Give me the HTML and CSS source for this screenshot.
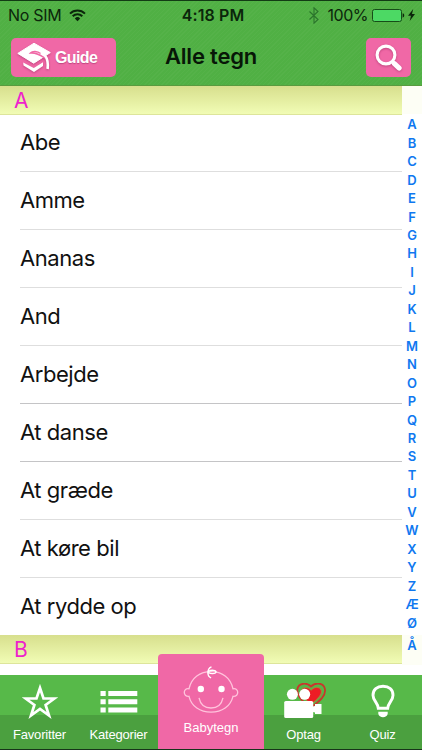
FILE: index.html
```html
<!DOCTYPE html>
<html lang="da">
  <head>
    <meta charset="UTF-8" />
    <meta name="viewport" content="width=device-width, initial-scale=1.0" />
    <title>Alle tegn</title>
    <link rel="stylesheet" href="styles.css">
  </head>
  <body>
    <div class="app">
      <header class="header">
        <div class="status">
          <div class="status-left">
            <span class="carrier">No SIM</span>
            <svg class="wifi" width="17" height="13" viewBox="0 0 17 13">
              <g fill="none" stroke="#0b260b" stroke-width="2">
                <path d="M1 4.6a10.6 10.6 0 0 1 15 0" />
                <path d="M3.7 7.3a6.8 6.8 0 0 1 9.6 0" />
              </g>
              <path d="M5.8 9.4a3.8 3.8 0 0 1 5.4 0L8.5 12.3z" fill="#0b260b" />
            </svg>
          </div>
          <span class="clock">4:18 PM</span>
          <div class="status-right">
            <svg class="bluetooth" width="10" height="17" viewBox="0 0 10 17">
              <path d="M.5 4.5l8.5 8-4 3.7V.8l4 3.7-8.5 8" fill="none" stroke="#2b742c" stroke-width="1.1" />
            </svg>
            <span class="percent">100%</span>
            <svg class="battery" width="33" height="13" viewBox="0 0 33 13">
              <rect x=".5" y=".5" width="29" height="12" rx="2" fill="#4cd964" stroke="#164d18" />
              <path d="M30.6 4.3c2.2.4 2.2 4 0 4.4z" fill="#0b260b" />
            </svg>
            <svg class="bolt" width="7" height="12" viewBox="0 0 7 12">
              <path d="M5.2 0L0 6.8h3L1.7 12 7 5H4z" fill="#0b260b" />
            </svg>
          </div>
        </div>
        <div class="navbar">
          <button class="guide-btn">
            <svg width="34" height="30" viewBox="0 0 34 30">
              <path d="M.8 10.4L17 .2l16.3 9.4-16.6 10.6z" fill="#fff" stroke="#fff" stroke-linejoin="round" />
              <path d="M23.5 10.5c-3-2.4-8-2.8-10-.4 4.500-.6 7.500.6 14.500 5" fill="none" stroke="#f068a6" stroke-width="1.5" />
              <path d="M28 12.5c2.6 3.500 3.200 8 2.600 13.500" fill="none" stroke="#fff" stroke-width="2.6" />
              <path d="M6.2 19.500l10.600 5.600 9.200-5.800v3.600L17 29 6.500 22.500z" fill="#fff" />
            </svg>
            <span>Guide</span>
          </button>
          <h1>Alle tegn</h1>
          <button class="search-btn" aria-label="Søg">
            <svg width="28" height="28" viewBox="0 0 28 28">
              <circle cx="11" cy="11" r="8.9" fill="none" stroke="#fff" stroke-width="3.1" />
              <path d="M17 17.2l2 2" stroke="#fff" stroke-width="3.5" />
              <path d="M19.4 19.6l4.8 4.5" stroke="#fff" stroke-width="5" stroke-linecap="round" />
            </svg>
          </button>
        </div>
      </header>

      <main class="content">
        <div class="list">
          <h2 class="section">A</h2>
          <ul>
            <li>Abe</li>
            <li>Amme</li>
            <li>Ananas</li>
            <li>And</li>
            <li class="dark">Arbejde</li>
            <li class="dark">At danse</li>
            <li>At græde</li>
            <li>At køre bil</li>
            <li>At rydde op</li>
          </ul>
          <h2 class="section">B</h2>
        </div>
        <div class="index">
          <span>A</span><span>B</span><span>C</span><span>D</span><span>E</span>
          <span>F</span><span>G</span><span>H</span><span>I</span><span>J</span>
          <span>K</span><span>L</span><span>M</span><span>N</span><span>O</span>
          <span>P</span><span>Q</span><span>R</span><span>S</span><span>T</span>
          <span>U</span><span>V</span><span>W</span><span>X</span><span>Y</span>
          <span>Z</span><span>Æ</span><span>Ø</span><span class="ring">Å</span>
        </div>
      </main>

      <nav class="tabbar">
        <a class="tab favorites">
          <svg width="36" height="38" viewBox="0 0 36 38">
            <path d="M18 5l3.5 10.5h11l-8.900 6.500 3.400 10.500-9-6.500-9 6.500 3.400-10.500-8.900-6.500h11z" fill="none" stroke="#fff" stroke-width="2.7" />
          </svg>
          <span>Favoritter</span>
        </a>
        <a class="tab categories">
          <svg width="38" height="38" viewBox="0 0 38 38">
            <path d="M.5 8h5.200v5H.5zM8.300 8h29v5h-29zM.5 16.200h5.200v5H.5zM8.300 16.200h29v5h-29zM.5 24.500h5.200v5H.5zM8.300 24.500h29v5h-29z" fill="#fff" />
          </svg>
          <span>Kategorier</span>
        </a>
        <a class="tab active">
          <svg width="56" height="50" viewBox="0 0 56 50">
            <g fill="none" stroke="#ffc3dc" stroke-width="1.3">
              <path d="M6 22.8C8.5 11.5 17 5.6 28 5.6s19.500 5.900 22 17.200c6-1.200 6.600 8 0 7.500C47.500 40.500 39 46.200 28 46.200S8.500 40.500 6 30.300c-6.600.5-6-8.700 0-7.500z" />
              <path d="M16 31.800c1.500 7 6 10.200 12 10.200s10.500-3.200 12-10.200" />
            </g>
            <path d="M28.500 .8c-4.500 1.400-5 9.500-.4 11M25.500 5.500c3-2.200 8.200-1 7.500.8-.7 1.900-5.500 1.500-7.500.3" fill="none" stroke="#fff" stroke-width="1.4" />
            <circle cx="17.800" cy="23" r="3.2" fill="#fff" />
            <circle cx="38.500" cy="23" r="3.2" fill="#fff" />
          </svg>
          <span>Babytegn</span>
        </a>
        <a class="tab record">
          <svg width="46" height="38" viewBox="0 0 46 38">
            <path d="M30 3.500C25.500-1 18 0 16.500 5.500 15 12.500 21 18 30 24.500 39 18 45.500 12.500 43.800 5.500 42-.5 34.500-1 30 3.500z" fill="#53b948" stroke="#c9372c" stroke-width="1.8" />
            <path d="M30.200 7c-4-4-9.200-2.700-10.200 1-1.300 4.500 4.500 9 10.200 13.200C36 17 41.800 12.500 40.400 7.500 39.200 3.600 33.500 3 30.200 7z" fill="#ee1c25" stroke="#9b8a3c" stroke-width="1.1" />
            <circle cx="11.400" cy="11.300" r="5.5" fill="#fff" />
            <circle cx="23.700" cy="11.300" r="5.5" fill="#fff" />
            <rect x="3.200" y="18" width="29" height="17" rx="1.6" fill="#fff" />
            <path d="M32 23.500l2-.5v-2h6.500v10H34v-1.500l-2-.4z" fill="#fff" />
          </svg>
          <span>Optag</span>
        </a>
        <a class="tab quiz">
          <svg width="26" height="38" viewBox="0 0 26 38">
            <path d="M8.300 25.300C7.800 19.500 3 17.500 3 12.300 3 6.500 7 3.300 13 3.300s10 3.200 10 9c0 5.200-4.800 7.200-5.300 13z" fill="none" stroke="#fff" stroke-width="2.9" />
            <path d="M8.300 28.800h9.400v2c-.5 4.600-8.900 4.600-9.400 0z" fill="#fff" />
          </svg>
          <span>Quiz</span>
        </a>
      </nav>
    </div>
  </body>
</html>
```
FILE: styles.css
```css
* {
  box-sizing: border-box;
}

body {
  margin: 0;
  font-family: Inter, sans-serif;
  background: #fff;
  color: #111;
}

.app {
  width: 422px;
  height: 750px;
  display: flex;
  flex-direction: column;
  overflow: hidden;
  border-bottom: 1px solid #17341a;
}

/* header */
.header {
  height: 86px;
  flex: none;
  border-top: 1px solid #123b14;
  border-bottom: 1px solid #599b3f;
  background: repeating-linear-gradient(135deg, #50b044 0, #50b044 2px, #55b249 2px, #55b249 3px);
}

.status {
  height: 28px;
  display: grid;
  grid-template-columns: 1fr auto 1fr;
  align-items: center;
  padding: 0 7px 0 8px;
  font-size: 16px;
  color: #0b260b;
}

.status-left,
.status-right {
  display: flex;
  align-items: center;
}

.status-right {
  justify-content: flex-end;
}

.carrier {
  letter-spacing: -0.3px;
}

.wifi {
  margin-left: 8px;
}

.clock {
  padding-left: 3px;
  font-weight: 600;
  letter-spacing: 0.1px;
}

.bluetooth {
  margin-right: 9px;
}

.percent {
  letter-spacing: -0.5px;
}

.battery {
  margin-left: 4px;
}

.bolt {
  margin-left: 3px;
}

.navbar {
  height: 57px;
  display: grid;
  grid-template-columns: 1fr auto 1fr;
  align-items: center;
  padding: 0 11px;
}

.navbar h1 {
  margin: 0;
  padding-bottom: 3px;
  font-size: 22px;
  font-weight: 600;
  letter-spacing: -0.2px;
  color: #071707;
}

button {
  border: none;
  padding: 0;
  height: 39px;
  border-radius: 5px;
  background-color: #f068a6;
  display: flex;
  align-items: center;
}

button svg {
  filter: drop-shadow(0 1px 1px rgba(120, 20, 70, 0.4));
}

.guide-btn {
  width: 105px;
  padding-left: 6px;
  gap: 4px;
  color: #fff;
  font-family: "Liberation Sans", Arial, sans-serif;
  font-size: 16px;
  font-weight: bold;
  letter-spacing: -0.6px;
  text-shadow: 0 1px 1px rgba(120, 20, 70, 0.4);
}

.search-btn {
  width: 45px;
  justify-self: end;
  padding: 1px 0 0 9px;
}

/* list */
.content {
  height: 589px;
  flex: none;
  display: flex;
}

.list {
  width: 402px;
}

.section {
  height: 29px;
  margin: 0;
  padding-left: 14px;
  border-bottom: 1px solid #dde59b;
  background: linear-gradient(#d7df8d, #f1fcb5);
  font-size: 21px;
  line-height: 29px;
  font-weight: 400;
  color: #ee22cc;
}

ul {
  list-style: none;
  margin: 0;
  padding: 0;
}

li {
  height: 58px;
  margin-left: 20px;
  border-bottom: 1px solid #dedede;
  font-size: 22px;
  line-height: 57px;
  letter-spacing: -0.45px;
}

li:first-child {
  height: 57px;
  line-height: 55px;
}

li:last-child {
  height: 57px;
  border-bottom: none;
}

li.dark {
  border-bottom-color: #c4c4c6;
}

.index {
  width: 20px;
  height: 579px;
  padding-top: 29.3px;
  display: flex;
  flex-direction: column;
  align-items: center;
  background: linear-gradient(#fdfef5 0, #fdfef5 28px, #fff 28px, #fff 549px, #fdfef5 549px);
  color: #0f78f0;
  font-size: 13px;
  font-weight: 600;
}

.index span {
  height: 18.46px;
  line-height: 18.46px;
}

.index .ring {
  margin-top: 4px;
}

/* tabs */
.tabbar {
  height: 74px;
  flex: none;
  display: flex;
  background: linear-gradient(#57b949 40px, #4ba03f 40px);
}

.tab {
  width: 79px;
  display: flex;
  flex-direction: column;
  align-items: center;
  padding-top: 8px;
  color: #fff;
  font-family: "Liberation Sans", Arial, sans-serif;
  font-size: 13px;
  line-height: 16px;
  letter-spacing: -0.2px;
}

.tab span {
  margin-top: 6px;
}

.tab.active {
  width: 106px;
  height: 95px;
  margin-top: -21px;
  padding-top: 12px;
  border-radius: 4px 4px 0 0;
  background: #f068a6;
  letter-spacing: 0;
}

.tab.active span {
  margin-top: 4px;
}
```
